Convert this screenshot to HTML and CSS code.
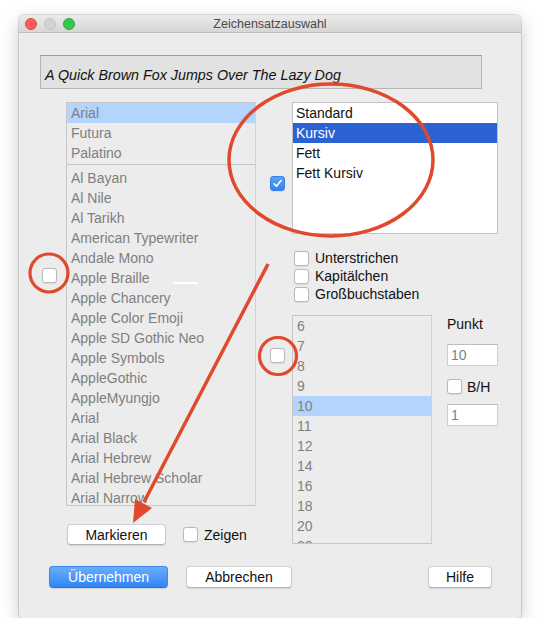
FILE: index.html
```html
<!DOCTYPE html>
<html lang="de">
<head>
    <meta charset="UTF-8">
    <meta name="viewport" content="width=device-width, initial-scale=1.0">
    <title>Zeichensatzauswahl</title>
    <link rel="stylesheet" href="styles.css">
</head>
<body>
    <div class="window">
        <div class="titlebar">
            <div class="lights">
                <span class="light red"></span>
                <span class="light gray"></span>
                <span class="light green"></span>
            </div>
            <div class="title">Zeichensatzauswahl</div>
        </div>

        <div class="content">
            <div class="preview">A Quick Brown Fox Jumps Over The Lazy Dog</div>

            <div class="main">
                <div class="left">
                    <div class="list-row">
                        <span class="check left-check"></span>
                        <ul class="list font-list">
                            <li class="sel">Arial</li>
                            <li>Futura</li>
                            <li>Palatino</li>
                            <li class="sep"></li>
                            <li>Al Bayan</li>
                            <li>Al Nile</li>
                            <li>Al Tarikh</li>
                            <li>American Typewriter</li>
                            <li>Andale Mono</li>
                            <li>Apple Braille</li>
                            <li>Apple Chancery</li>
                            <li>Apple Color Emoji</li>
                            <li>Apple SD Gothic Neo</li>
                            <li>Apple Symbols</li>
                            <li>AppleGothic</li>
                            <li>AppleMyungjo</li>
                            <li>Arial</li>
                            <li>Arial Black</li>
                            <li>Arial Hebrew</li>
                            <li>Arial Hebrew Scholar</li>
                            <li>Arial Narrow</li>
                        </ul>
                    </div>
                    <div class="mark-row">
                        <button class="btn mark-btn">Markieren</button>
                        <label class="opt"><span class="check"></span>Zeigen</label>
                    </div>
                </div>

                <div class="right">
                    <div class="style-row">
                        <span class="check checked style-check">
                            <svg width="15" height="15" viewBox="0 0 15 15"><path d="M4 7.8 L6.4 10.3 L11 4.6" fill="none" stroke="#fff" stroke-width="1.6" stroke-linecap="round" stroke-linejoin="round"/></svg>
                        </span>
                        <ul class="list style-list">
                            <li>Standard</li>
                            <li class="sel-dark">Kursiv</li>
                            <li>Fett</li>
                            <li>Fett Kursiv</li>
                        </ul>
                    </div>

                    <div class="opts">
                        <label class="opt"><span class="check"></span>Unterstrichen</label>
                        <label class="opt"><span class="check"></span>Kapitälchen</label>
                        <label class="opt"><span class="check"></span>Großbuchstaben</label>
                    </div>

                    <div class="size-row">
                        <span class="check size-check"></span>
                        <ul class="list size-list">
                            <li>6</li>
                            <li>7</li>
                            <li>8</li>
                            <li>9</li>
                            <li class="sel">10</li>
                            <li>11</li>
                            <li>12</li>
                            <li>14</li>
                            <li>16</li>
                            <li>18</li>
                            <li>20</li>
                            <li>22</li>
                        </ul>
                        <div class="punkt">
                            <div class="punkt-label">Punkt</div>
                            <div class="field">10</div>
                            <label class="opt bh"><span class="check"></span>B/H</label>
                            <div class="field">1</div>
                        </div>
                    </div>
                </div>
            </div>

            <div class="buttons">
                <button class="btn primary">Übernehmen</button>
                <button class="btn cancel">Abbrechen</button>
                <button class="btn help">Hilfe</button>
            </div>
        </div>

        <!-- red annotations drawn over the dialog -->
        <svg class="marks" width="502" height="603" viewBox="0 0 502 603">
            <rect x="154" y="267" width="25" height="2" fill="#fff"/>
            <ellipse cx="312" cy="145" rx="102" ry="76" fill="none" stroke="#e0492c" stroke-width="3.5"/>
            <circle cx="30" cy="258" r="19" fill="none" stroke="#e0492c" stroke-width="3.2"/>
            <circle cx="259" cy="341" r="18.5" fill="none" stroke="#e0492c" stroke-width="3.2"/>
            <line x1="249" y1="249" x2="125" y2="487" stroke="#e0492c" stroke-width="3.5"/>
            <polygon points="114,508 133,493 116,484" fill="#e0492c"/>
        </svg>
    </div>
</body>
</html>
```

FILE: styles.css
```css
*{
    padding: 0;
    margin: 0;
    box-sizing: border-box;
    font-family: "Liberation Sans", Arial, sans-serif;
}
body{
    background: #fff;
}
.window{
    position: relative;
    margin: 15px 0 0 19px;
    width: 502px;
    height: 603px;
    background: #ececec;
    border-radius: 5px 5px 4px 4px;
    box-shadow: 0 0 0 1px rgba(0,0,0,0.12), 0 6px 18px rgba(0,0,0,0.22);
    overflow: hidden;
}
.titlebar{
    height: 18px;
    display: grid;
    grid-template-columns: 1fr auto 1fr;
    align-items: center;
    background: linear-gradient(#ebebeb, #d6d6d6);
    border-bottom: 1px solid #bdbdbd;
}
.lights{
    display: flex;
    gap: 7px;
    padding-left: 6px;
}
.light{
    width: 12px;
    height: 12px;
    border-radius: 50%;
}
.red{ background: #fc5f57; border: 1px solid #e2463f; }
.gray{ background: #d3d3d3; border: 1px solid #c4c4c4; }
.green{ background: #35c84a; border: 1px solid #24a93a; }
.title{
    font-size: 12.5px;
    color: #4a4a4a;
}

.content{
    padding: 22px 0 0 21px;
}
.preview{
    width: 442px;
    height: 34px;
    padding: 6px 0 0 4px;
    display: flex;
    align-items: center;
    font-size: 14.3px;
    font-style: italic;
    color: #111;
    background: #e2e2e2;
    border: 1px solid #b4b4b4;
    border-top-color: #9c9c9c;
}

.main{
    display: flex;
    margin-top: 13px;
}
.left{
    width: 216px;
}
.list-row{
    display: flex;
    gap: 9px;
    padding-left: 2px;
}
.check{
    display: block;
    flex: none;
    width: 15px;
    height: 15px;
    background: #fff;
    border: 1px solid #b9b9b9;
    border-radius: 3px;
    box-shadow: 0 0.5px 1px rgba(0,0,0,0.08);
}
.checked{
    background: linear-gradient(#5aa2f8, #2f84f3);
    border-color: #3a82e8;
}
.checked svg{
    display: block;
    margin: -1px;
}
.left-check{
    margin-top: 166px;
}

.list{
    list-style: none;
    overflow: hidden;
    border: 1px solid #c6c6c6;
    font-size: 14px;
}
.list li{
    height: 20px;
    line-height: 20px;
    padding-left: 4px;
    white-space: nowrap;
}
.font-list{
    width: 190px;
    height: 404px;
    color: #7f7f7f;
    border-right-color: #d2d2d2;
}
.font-list .sep{
    height: 1px;
    margin: 1px 0 3px;
    background: #c6c6c6;
}
.sel{
    background: #b3d5fd;
}
.sel-dark{
    background: #2c63d4;
    color: #fff;
}

.mark-row{
    display: flex;
    align-items: center;
    gap: 17px;
    margin-top: 18px;
    padding-left: 27px;
}
.btn{
    height: 22px;
    font-size: 14px;
    color: #111;
    background: #fff;
    border: 1px solid #c9c9c9;
    border-top-color: #d3d3d3;
    border-bottom-color: #b4b4b4;
    border-radius: 4px;
    box-shadow: 0 0.5px 1px rgba(0,0,0,0.1);
}
.mark-btn{
    width: 99px;
    height: 21px;
}
.opt{
    display: flex;
    align-items: center;
    gap: 6px;
    font-size: 14px;
    color: #111;
}

.right{
    margin-left: 14px;
}
.style-row{
    display: flex;
    gap: 7px;
}
.style-check{
    margin-top: 74px;
}
.style-list{
    width: 206px;
    height: 132px;
    background: #fff;
    color: #111;
    border-color: #c2c2c2;
}
.style-list li{
    padding-left: 3px;
}

.opts{
    margin-top: 15px;
    padding-left: 24px;
}
.opts .opt{
    height: 18px;
}

.size-row{
    display: flex;
    margin-top: 12px;
}
.size-check{
    margin-top: 33px;
}
.size-list{
    width: 140px;
    height: 229px;
    margin-left: 7px;
    color: #7f7f7f;
    border-right-color: #d2d2d2;
}
.punkt{
    margin-left: 15px;
    width: 51px;
}
.punkt-label{
    height: 18px;
    line-height: 18px;
    font-size: 14px;
    color: #111;
}
.field{
    height: 22px;
    line-height: 20px;
    padding-left: 3px;
    margin-top: 11px;
    font-size: 14px;
    color: #7f7f7f;
    background: #fff;
    border: 1px solid #d0d0d0;
    border-top-color: #bdbdbd;
}
.bh{
    height: 15px;
    margin-top: 13px;
    gap: 5px;
}
.bh + .field{
    margin-top: 10px;
}

.buttons{
    display: flex;
    gap: 18px;
    width: 452px;
    margin-top: 21px;
    padding-left: 9px;
}
.primary{
    width: 119px;
    color: #fff;
    background: linear-gradient(#69aefa, #3285f6);
    border-color: #3c86ef;
    border-bottom-color: #2a6fd8;
}
.cancel{
    width: 106px;
}
.help{
    width: 64px;
    margin-left: auto;
}

.marks{
    position: absolute;
    top: 0;
    left: 0;
    pointer-events: none;
}
```
